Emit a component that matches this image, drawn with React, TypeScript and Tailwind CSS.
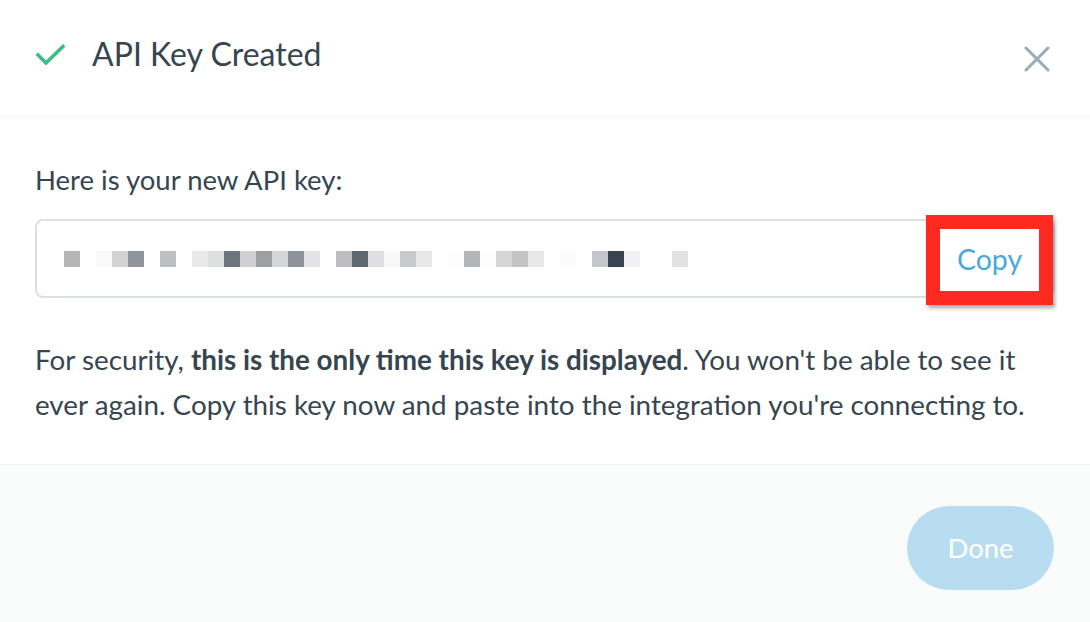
const keyBlocks: [number, string][] = [
  [64, '#b4b6b8'], [96, '#f8f9f9'], [112, '#d0d2d4'], [128, '#8f959b'], [160, '#bdc0c3'],
  [192, '#e8e9ea'], [208, '#dcdfe0'], [224, '#6e757c'], [240, '#cfd0d2'], [256, '#9ca0a3'],
  [272, '#d4d7d9'], [288, '#8e9299'], [304, '#e2e3e4'], [336, '#bbbdc0'], [352, '#5f686f'],
  [368, '#dedfe1'], [384, '#f7f8f8'], [400, '#c6cacd'], [416, '#e6e8e8'], [448, '#fdfdfd'],
  [464, '#b3b6b9'], [480, '#fdfdfd'], [496, '#d5d6d8'], [512, '#c2c3c5'], [528, '#e6e8e8'],
  [560, '#fbfbfb'], [592, '#c3c7cb'], [608, '#36454f'], [624, '#f0f1f3'], [672, '#e2e2e2'],
];

const PixelatedKey = () => (
  <svg width="640" height="16" className="block">
    {keyBlocks.map(([x, c]) => (
      <rect key={x} x={x - 64} y={0} width={16} height={16} fill={c} />
    ))}
  </svg>
);

export default function App() {
  return (
    <div
      className="w-[1090px] h-[622px] bg-white text-[#36454f] flex flex-col overflow-hidden"
      style={{ fontFamily: 'Lato, "Open Sans", sans-serif' }}
    >
      {/* Header */}
      <div className="h-[117px] shrink-0 flex items-center pl-[36px] pr-[40px] border-b border-[#f1f3f4]">
        <svg width="29" height="21" viewBox="0 0 29 21" className="mr-[27px] -mt-[8px]">
          <path d="M2 11 L10 19 L27 2.5" fill="none" stroke="#3dbb85" strokeWidth="3.6" strokeLinecap="square" />
        </svg>
        <h1 className="text-[32px] leading-none -mt-[8px]">API Key Created</h1>
        <button className="ml-auto mt-[2px]" aria-label="Close">
          <svg width="26" height="26" viewBox="0 0 26 26">
            <path d="M2 2 L24 24 M24 2 L2 24" stroke="#9aaab8" strokeWidth="3" strokeLinecap="round" />
          </svg>
        </button>
      </div>

      {/* Body */}
      <div className="h-[348px] shrink-0 px-[35px] pt-[46px] border-b border-[#eef1f2]">
        <p className="text-[27.5px] leading-[34px]">Here is your new API key:</p>
        <div className="relative mt-[22px] h-[79px] border-2 border-[#dadfe2] rounded-[8px] flex items-center pl-[27px]">
          <PixelatedKey />
          <div className="absolute right-0 top-[-6px] w-[127px] h-[90px] border-[14px] border-[#ff2a1f] bg-white shadow-[2px_3px_4px_rgba(0,0,0,0.35)] flex items-center justify-center">
            <span className="text-[28.5px] text-[#4aa8dc] leading-none -mt-[2px]">Copy</span>
          </div>
        </div>
        <p className="mt-[39px] text-[27.8px] leading-[45px]">
          For security, <strong className="font-bold">this is the only time this key is displayed</strong>. You won't be able to see it ever again. Copy this key now and paste into the integration you're connecting to.
        </p>
      </div>

      {/* Footer */}
      <div className="flex-1 bg-[#fafbfb] flex justify-end items-start pt-[41px] pr-[36px]">
        <button className="w-[147px] h-[84px] rounded-full bg-[#b9ddf0] text-white text-[27.5px]">
          Done
        </button>
      </div>
    </div>
  );
}
